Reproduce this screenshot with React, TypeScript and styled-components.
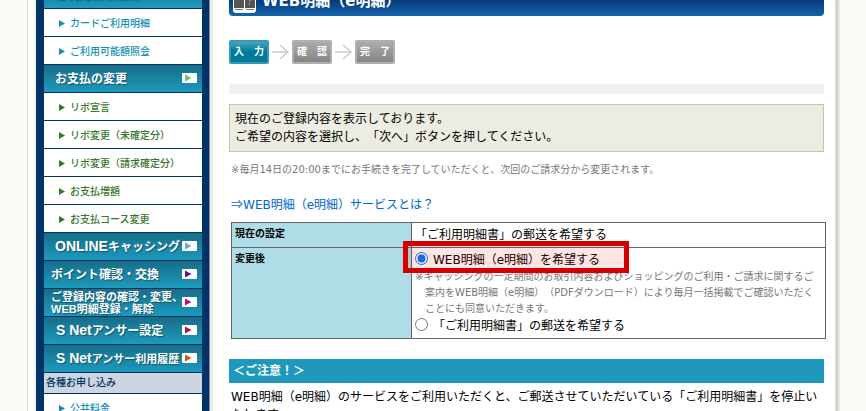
import React from "react";
import styled, { createGlobalStyle } from "styled-components";

const sans = `"DejaVu Sans", "Noto Sans CJK JP", sans-serif`;
const gothic = `"Liberation Sans", "Noto Sans CJK JP", sans-serif`;

const GlobalStyle = createGlobalStyle`
  * { box-sizing: border-box; }
  body {
    margin: 0;
    background: #f9faf3;
    overflow: hidden;
    font-family: ${sans};
    text-spacing-trim: space-all;
    color: #000;
  }
`;

const Page = styled.div`
  display: flex;
  height: 100vh;
  overflow: hidden;
  margin: 0 31px 0 27px;
  padding: 0 11px 0 8px;
  background: #fff;
  border-left: 1px solid #e0e1dc;
  box-shadow: 1px 0 #dcdcd8, 3px 0 #cfcfcb, 5px 0 #e8e8e3;
`;

const Sidebar = styled.nav`
  flex: none;
  width: 173px;
  padding: 0 7px 0 8px;
  background: #003366;
  box-shadow: 1px 0 #8094b0, 4px 0 #ebebeb, -2px 0 #f1f1f1;
  height: 100%;
  overflow: hidden;
`;

const Menu = styled.ul`
  list-style: none;
  margin: -19px 0 0;
  padding: 0;
  font-family: ${gothic};
`;

const MenuItem = styled.li`
  border-bottom: 1px solid #003366;
`;

const HeadLink = styled.a<{ $inset: number; $size: number }>`
  display: flex;
  align-items: center;
  justify-content: space-between;
  height: 27px;
  padding: 0 5px 0 ${(p) => p.$inset}px;
  background: linear-gradient(#176d88, #1e9abd);
  color: #fff;
  font-size: ${(p) => p.$size}px;
  line-height: 12px;
  font-weight: 700;
  text-decoration: none;
  text-shadow: 1px 1px 1px #11566c;
  white-space: nowrap;
`;

const HeadLabel = styled.span`
  flex: 1;
  min-width: 0;
`;

const Latin = styled.span`
  font-size: 14px;
`;

const Badge = styled.svg`
  flex: none;
  width: 15px;
  height: 10px;
  margin-bottom: 2px;
`;

const SubLink = styled.a<{ $color: string }>`
  display: flex;
  align-items: center;
  gap: 5px;
  height: 27px;
  padding: 2px 0 0 15px;
  background: #fff;
  color: ${(p) => p.$color};
  font-size: 10px;
  line-height: 18px;
  font-weight: 500;
  text-decoration: none;
  white-space: nowrap;
`;

const Arrow = styled.svg`
  width: 6px;
  height: 7px;
`;

const Category = styled.div`
  height: 20px;
  padding-left: 2px;
  background: #ccd5e0;
  color: #003366;
  font-size: 10px;
  font-weight: 500;
  line-height: 20px;
`;

const Main = styled.main`
  flex: 1;
  min-width: 0;
  padding-left: 20px;
`;

const Title = styled.h1`
  display: flex;
  align-items: center;
  gap: 6px;
  height: 32px;
  margin: -16px 0 24px;
  padding: 2px 4px 0;
  border-radius: 4px;
  background: linear-gradient(#05306b, #05397a 50%, #1464ab);
  color: #fff;
  font-size: 15px;
  line-height: 20px;
  font-weight: 700;
`;

const TitleIcon = styled.svg`
  width: 23px;
  height: 24px;
`;

const Steps = styled.ol`
  display: flex;
  align-items: center;
  gap: 3px;
  list-style: none;
  margin: 0 0 20px;
  padding: 0;
`;

const Step = styled.li<{ $active?: boolean }>`
  display: flex;
  justify-content: space-between;
  width: 40px;
  height: 24px;
  padding: 0 3px;
  border: 2px solid ${(p) => (p.$active ? "#3799b3" : "#b0b0b0")};
  border-radius: 2px;
  background: ${(p) =>
    p.$active ? "linear-gradient(#4aa5bd, #007b9c 45%)" : "linear-gradient(#acacac, #858585)"};
  color: #fff;
  font: 700 10px/20px ${gothic};
`;

const StepArrow = styled.svg`
  width: 17px;
  height: 16px;
`;

const Strip = styled.div`
  height: 10px;
  margin-bottom: 10px;
  background: #f1f1f1;
`;

const Notice = styled.p`
  margin: 0 0 8px;
  padding: 5px;
  border: 1px solid #c4c5a6;
  background: #ecece3;
  font-size: 12px;
  line-height: 18px;
`;

const Note = styled.p`
  margin: 0;
  padding-left: 2px;
  color: #777;
  font-size: 10px;
  line-height: 20px;
`;

const ServiceLink = styled.a`
  display: block;
  margin: 16px 0 8px 2px;
  color: #0066cc;
  font-size: 12px;
  line-height: 18px;
  text-decoration: none;
`;

const WideArrow = styled.span`
  font-family: "Noto Sans CJK JP", sans-serif;
  line-height: 12px;
`;

const Settings = styled.table`
  width: 100%;
  margin-left: 2px;
  border-collapse: collapse;
  font-size: 12px;
  line-height: 18px;

  th, td {
    border: 1px solid #666;
    padding: 3px;
    text-align: left;
    vertical-align: top;
  }
  th {
    width: 180px;
    background: #afdde7;
    font-size: 10px;
    line-height: 16px;
  }
`;

const Choice = styled.label`
  display: flex;
  align-items: center;
  gap: 5px;
  height: 18px;
`;

const Radio = styled.input`
  width: 13px;
  height: 13px;
  margin: 0 0 4px;
`;

const Highlighted = styled.div`
  position: relative;
`;

const RedFrame = styled.div`
  position: absolute;
  top: -10px;
  left: -12px;
  width: 226px;
  height: 32px;
  border: 5px solid #d40000;
  background: rgba(212, 0, 0, 0.1);
  pointer-events: none;
`;

const Terms = styled.p`
  margin: 0;
  padding-left: 10px;
  text-indent: -10px;
  color: #777;
  font-size: 10px;
  line-height: 16px;
`;

const TermsLine = styled.span`
  display: block;

  & + & {
    text-indent: 0;
  }
`;

const CautionTitle = styled.h2`
  margin: 20px 0 5px;
  padding: 0 4px;
  background: #1e99bc;
  color: #fff;
  font-size: 12px;
  line-height: 24px;
`;

const CautionText = styled.p`
  margin: 0;
  padding: 0 4px 0 2px;
  font-size: 12px;
  line-height: 18px;
`;

type Head = { kind: "head"; text: React.ReactNode; inset: number; size?: number; arrow: string };
type Sub = { kind: "sub"; text: string; color: string };
type Cat = { kind: "cat"; text: string };

const teal = "#1590b4";
const green = "#37762b";

const items: (Head | Sub | Cat)[] = [
  { kind: "head", text: "ご利用額の照会", inset: 11, arrow: "#3db0d0" },
  { kind: "sub", text: "カードご利用明細", color: teal },
  { kind: "sub", text: "ご利用可能額照会", color: teal },
  { kind: "head", text: "お支払の変更", inset: 11, arrow: "#78bd6c" },
  { kind: "sub", text: "リボ宣言", color: green },
  { kind: "sub", text: "リボ変更（未確定分）", color: green },
  { kind: "sub", text: "リボ変更（請求確定分）", color: green },
  { kind: "sub", text: "お支払増額", color: green },
  { kind: "sub", text: "お支払コース変更", color: green },
  { kind: "head", text: <><Latin>ONLINE</Latin>キャッシング</>, inset: 11, arrow: "#71a0df" },
  { kind: "head", text: "ポイント確認・交換", inset: 7, arrow: "#6610b0" },
  {
    kind: "head",
    text: <>ご登録内容の確認・変更、<br />WEB明細登録・解除</>,
    inset: 7,
    size: 11,
    arrow: "#b80f9a",
  },
  { kind: "head", text: <><Latin>S Net</Latin>アンサー設定</>, inset: 12, arrow: "#b51153" },
  {
    kind: "head",
    text: <><Latin>S Net</Latin>アンサー利用履歴</>,
    inset: 12,
    size: 11,
    arrow: "#c2600f",
  },
  { kind: "cat", text: "各種お申し込み" },
  { kind: "sub", text: "公共料金", color: teal },
];

function MenuEntry({ item }: { item: Head | Sub | Cat }) {
  if (item.kind === "cat") return <Category>{item.text}</Category>;
  if (item.kind === "sub")
    return (
      <SubLink href="#" $color={item.color}>
        <Arrow viewBox="0 0 6 7" aria-hidden="true">
          <path d="M0 0L6 3.5L0 7Z" fill={item.color} />
        </Arrow>
        {item.text}
      </SubLink>
    );
  return (
    <HeadLink href="#" $inset={item.inset} $size={item.size ?? 12}>
      <HeadLabel>{item.text}</HeadLabel>
      <Badge viewBox="0 0 15 10" aria-hidden="true">
        <rect width="15" height="10" rx="1" fill="#fff" />
        <path d="M3 1.5L9.5 5L3 8.5Z" fill={item.arrow} />
      </Badge>
    </HeadLink>
  );
}

function NextArrow() {
  return (
    <StepArrow viewBox="0 0 17 16" aria-hidden="true">
      <path d="M0 8H16M8 1L16 8L8 15" fill="none" stroke="#ccc" strokeWidth="1.5" />
    </StepArrow>
  );
}

export default function App() {
  return (
    <>
      <GlobalStyle />
      <Page lang="ja">
        <Sidebar>
          <Menu>
            {items.map((item, i) => (
              <MenuItem key={i}>
                <MenuEntry item={item} />
              </MenuItem>
            ))}
          </Menu>
        </Sidebar>
        <Main>
          <Title>
            <TitleIcon viewBox="0 0 23 24" aria-hidden="true">
              <rect width="23" height="24" rx="3" fill="#fff" />
              <path d="M1 4H10L11.5 5.5L13 4H22V19H13L11.5 20L10 19H1Z" fill="#555" />
              <path d="M11.5 5V20" stroke="#fff" />
              <path d="M2 20.5H10M13 20.5H21" stroke="#777" />
              <path d="M14 8Q16 6 18 8Q19 11 16 13M15.5 15H17" fill="none" stroke="#aaa" />
            </TitleIcon>
            WEB明細（e明細）
          </Title>
          <Steps>
            <Step $active><span>入</span><span>力</span></Step>
            <NextArrow />
            <Step><span>確</span><span>認</span></Step>
            <NextArrow />
            <Step><span>完</span><span>了</span></Step>
          </Steps>
          <Strip />
          <Notice>
            現在のご登録内容を表示しております。
            <br />
            ご希望の内容を選択し、「次へ」ボタンを押してください。
          </Notice>
          <Note>※毎月14日の20:00までにお手続きを完了していただくと、次回のご請求分から変更されます。</Note>
          <ServiceLink href="#"><WideArrow>⇒</WideArrow>WEB明細（e明細）サービスとは？</ServiceLink>
          <Settings>
            <tbody>
              <tr>
                <th scope="row">現在の設定</th>
                <td>「ご利用明細書」の郵送を希望する</td>
              </tr>
              <tr>
                <th scope="row">変更後</th>
                <td>
                  <Highlighted>
                    <Choice>
                      <Radio type="radio" name="delivery" defaultChecked />
                      WEB明細（e明細）を希望する
                    </Choice>
                    <RedFrame />
                  </Highlighted>
                  <Terms>
                    <TermsLine>※キャッシングの一定期間のお取引内容およびショッピングのご利用・ご請求に関するご</TermsLine>
                    <TermsLine>案内をWEB明細（e明細）（PDFダウンロード）により毎月一括掲載でご確認いただく</TermsLine>
                    <TermsLine>ことにも同意いただきます。</TermsLine>
                  </Terms>
                  <Choice>
                    <Radio type="radio" name="delivery" />
                    「ご利用明細書」の郵送を希望する
                  </Choice>
                </td>
              </tr>
            </tbody>
          </Settings>
          <CautionTitle>＜ご注意！＞</CautionTitle>
          <CautionText>
            WEB明細（e明細）のサービスをご利用いただくと、ご郵送させていただいている「ご利用明細書」を停止いたします。
          </CautionText>
        </Main>
      </Page>
    </>
  );
}
